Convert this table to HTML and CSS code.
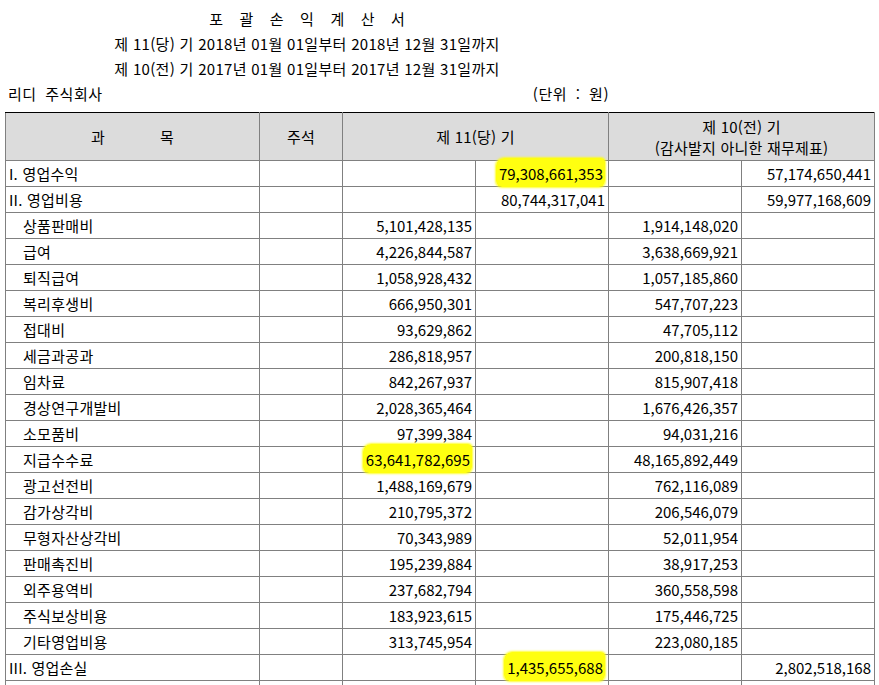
FILE: index.html
```html
<!DOCTYPE html>
<html lang="ko">
<head>
<meta charset="utf-8">
<title>포괄손익계산서</title>
<link rel="stylesheet" href="styles.css">
</head>
<body>
<div class="head">
  <div class="title">포괄손익계산서</div>
  <div class="period">제 11(당) 기 2018년 01월 01일부터 2018년 12월 31일까지</div>
  <div class="period">제 10(전) 기 2017년 01월 01일부터 2017년 12월 31일까지</div>
  <div class="meta"><span>리디 주식회사</span><span>(단위 : 원)</span></div>
</div>
<table class="fs">
  <colgroup>
    <col class="c-item"><col class="c-note"><col class="c-amt"><col class="c-amt"><col class="c-amt"><col class="c-amt">
  </colgroup>
  <thead>
    <tr>
      <th><span class="gap">과</span>목</th>
      <th>주석</th>
      <th colspan="2">제 11(당) 기</th>
      <th colspan="2">제 10(전) 기<br>(감사발지 아니한 재무제표)</th>
    </tr>
  </thead>
  <tbody>
    <tr><td class="lv1">I. 영업수익</td><td></td><td></td><td class="n"><span class="hl">79,308,661,353</span></td><td></td><td class="n">57,174,650,441</td></tr>
    <tr><td class="lv1">II. 영업비용</td><td></td><td></td><td class="n">80,744,317,041</td><td></td><td class="n">59,977,168,609</td></tr>
    <tr><td class="lv2">상품판매비</td><td></td><td class="n">5,101,428,135</td><td></td><td class="n">1,914,148,020</td><td></td></tr>
    <tr><td class="lv2">급여</td><td></td><td class="n">4,226,844,587</td><td></td><td class="n">3,638,669,921</td><td></td></tr>
    <tr><td class="lv2">퇴직급여</td><td></td><td class="n">1,058,928,432</td><td></td><td class="n">1,057,185,860</td><td></td></tr>
    <tr><td class="lv2">복리후생비</td><td></td><td class="n">666,950,301</td><td></td><td class="n">547,707,223</td><td></td></tr>
    <tr><td class="lv2">접대비</td><td></td><td class="n">93,629,862</td><td></td><td class="n">47,705,112</td><td></td></tr>
    <tr><td class="lv2">세금과공과</td><td></td><td class="n">286,818,957</td><td></td><td class="n">200,818,150</td><td></td></tr>
    <tr><td class="lv2">임차료</td><td></td><td class="n">842,267,937</td><td></td><td class="n">815,907,418</td><td></td></tr>
    <tr><td class="lv2">경상연구개발비</td><td></td><td class="n">2,028,365,464</td><td></td><td class="n">1,676,426,357</td><td></td></tr>
    <tr><td class="lv2">소모품비</td><td></td><td class="n">97,399,384</td><td></td><td class="n">94,031,216</td><td></td></tr>
    <tr><td class="lv2">지급수수료</td><td></td><td class="n"><span class="hl">63,641,782,695</span></td><td></td><td class="n">48,165,892,449</td><td></td></tr>
    <tr><td class="lv2">광고선전비</td><td></td><td class="n">1,488,169,679</td><td></td><td class="n">762,116,089</td><td></td></tr>
    <tr><td class="lv2">감가상각비</td><td></td><td class="n">210,795,372</td><td></td><td class="n">206,546,079</td><td></td></tr>
    <tr><td class="lv2">무형자산상각비</td><td></td><td class="n">70,343,989</td><td></td><td class="n">52,011,954</td><td></td></tr>
    <tr><td class="lv2">판매촉진비</td><td></td><td class="n">195,239,884</td><td></td><td class="n">38,917,253</td><td></td></tr>
    <tr><td class="lv2">외주용역비</td><td></td><td class="n">237,682,794</td><td></td><td class="n">360,558,598</td><td></td></tr>
    <tr><td class="lv2">주식보상비용</td><td></td><td class="n">183,923,615</td><td></td><td class="n">175,446,725</td><td></td></tr>
    <tr><td class="lv2">기타영업비용</td><td></td><td class="n">313,745,954</td><td></td><td class="n">223,080,185</td><td></td></tr>
    <tr><td class="lv1">III. 영업손실</td><td></td><td></td><td class="n"><span class="hl">1,435,655,688</span></td><td></td><td class="n">2,802,518,168</td></tr>
    <tr><td></td><td></td><td></td><td></td><td></td><td></td></tr>
  </tbody>
</table>
</body>
</html>
```

FILE: styles.css
```css
html, body {
  margin: 0;
  padding: 0;
  background: #ffffff;
  color: #000000;
  font-family: "Noto Sans CJK KR", "Noto Sans", sans-serif;
  font-size: 15px;
}

body {
  padding: 6px 0 0 5px;
  overflow: hidden;
}

.head {
  width: 604px;
  margin-bottom: 6px;
}

.head > div {
  height: 25px;
  line-height: 25px;
}

.title {
  text-align: center;
  letter-spacing: 16.5px;
  text-indent: 16.5px;
}

.period {
  text-align: center;
  letter-spacing: 0.3px;
}

.meta {
  display: flex;
  justify-content: space-between;
  padding-left: 3px;
  letter-spacing: 0.5px;
  word-spacing: 4px;
}

.fs {
  border-collapse: collapse;
  table-layout: fixed;
  width: 869px;
  border: 1px solid #000000;
}

.c-item { width: 254px; }
.c-note { width: 83px; }
.c-amt { width: 133px; }

.fs th,
.fs td {
  border: 1px solid #808080;
  padding: 0 3px;
  white-space: nowrap;
}

.fs thead th {
  background: #dcdcdc;
  font-weight: normal;
  height: 47px;
  line-height: 21px;
  text-align: center;
  border-top: 1px solid #000000;
  letter-spacing: 0.2px;
}

.gap { margin-right: 55px; }

.fs td {
  height: 25px;
  line-height: 25px;
}

.lv1 { padding-left: 2px; letter-spacing: 0.2px; }
.fs td.lv2 { padding-left: 17px; letter-spacing: 0.3px; }

.n {
  text-align: right;
  letter-spacing: 0;
}

.hl {
  background: #ffff10;
  padding: 5px 2px 3px 3px;
  border-radius: 8px 4px 6px 6px;
  box-shadow: 0 0 2px 1px rgba(255, 255, 16, 0.85);
}
```
